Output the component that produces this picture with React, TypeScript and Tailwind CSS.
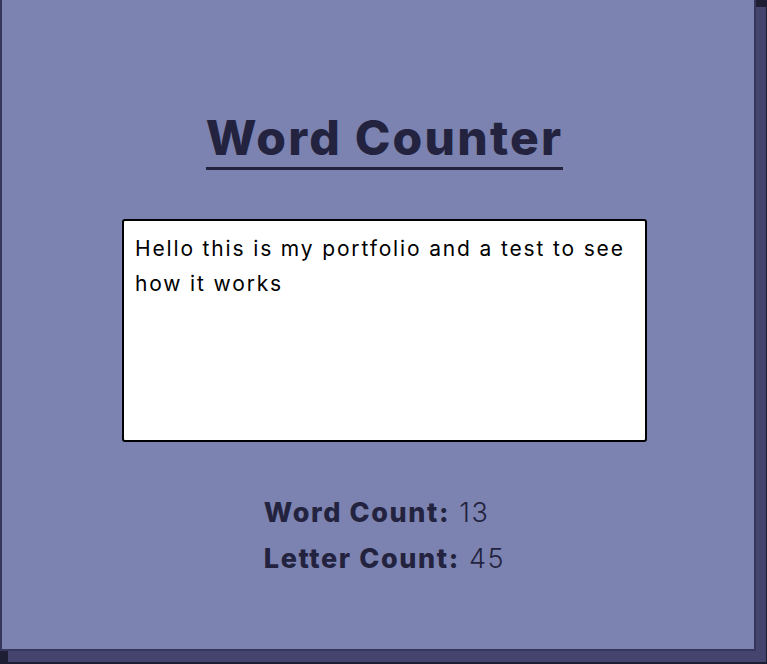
import React, { useState } from 'react';

export default function App() {
  const [text, setText] = useState('Hello this is my portfolio and a test to see how it works');

  const words = text.trim() === '' ? 0 : text.trim().split(/\s+/).length;
  const letters = text.replace(/\s/g, '').length;

  return (
    <div className="h-[664px] w-full overflow-hidden bg-[#1d1d33] font-['Inter',sans-serif]">
      <div className="-mt-[2px] flex h-[653px] w-[756px] flex-col items-center border-2 border-[#35365c] bg-[#7c83b1] pl-[13px] shadow-[9px_10px_0_1px_#45446e]">
        <h1 className="mt-[110px] inline-block border-b-[3px] border-[#23233f] pb-[1px] text-[48px] font-extrabold leading-[56px] tracking-[2.2px] text-[#23233f]">
          Word Counter
        </h1>

        <textarea
          value={text}
          onChange={(e) => setText(e.target.value)}
          className="mt-[49px] h-[223px] w-[525px] resize-none rounded-[3px] border-2 border-black bg-white px-[11px] py-[10px] text-[21px] leading-[35px] tracking-[1.85px] text-black outline-none"
        />

        <div className="mt-[48px] flex flex-col items-start text-[27px] leading-[46px] tracking-[1.6px] text-[#23233f]">
          <p>
            <span className="font-extrabold">Word Count:</span> <span className="font-light">{words}</span>
          </p>
          <p>
            <span className="font-extrabold">Letter Count:</span> <span className="font-light">{letters}</span>
          </p>
        </div>
      </div>
    </div>
  );
}
